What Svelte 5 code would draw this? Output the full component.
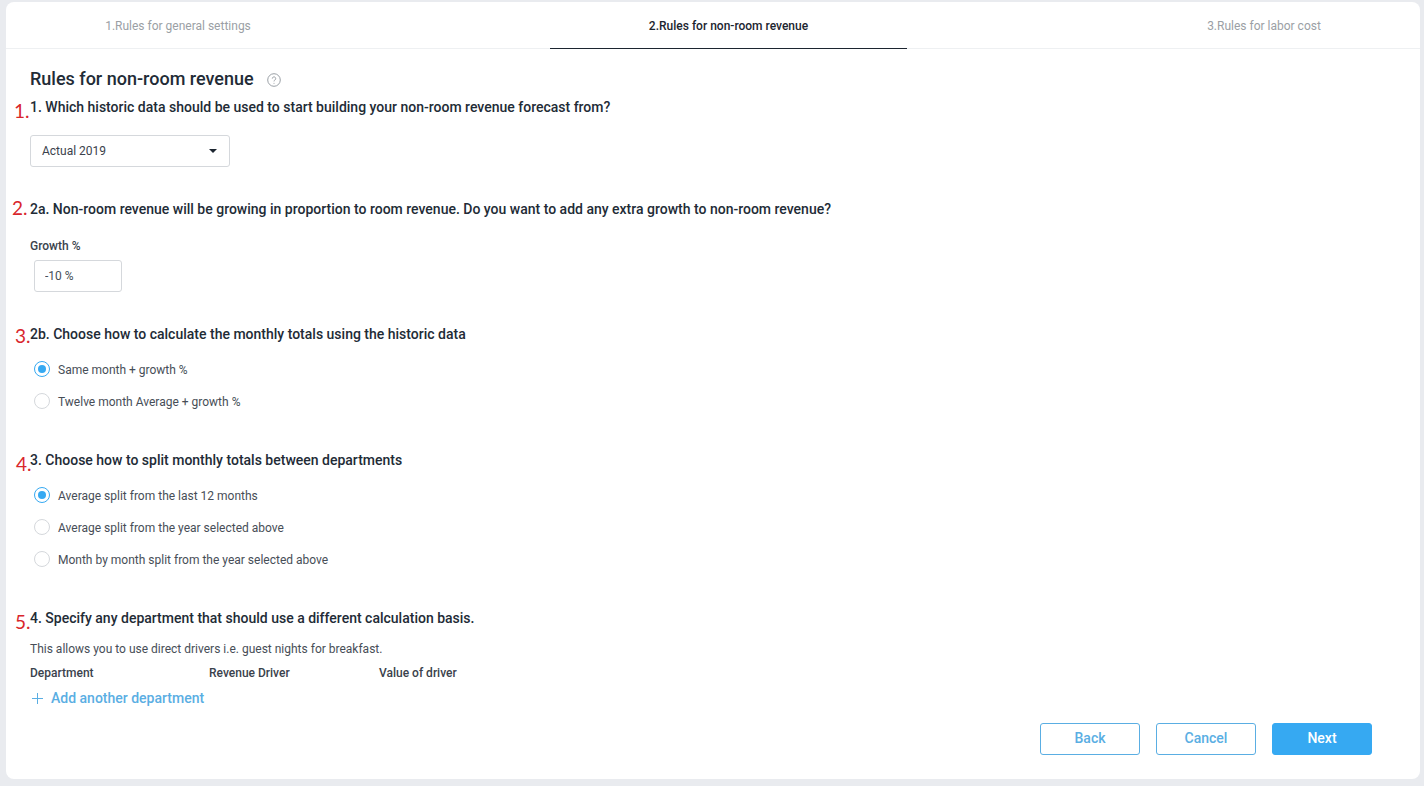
<script lang="ts">
    let growth = $state("-10 %");
    let monthly = $state("same");
    let split = $state("last12");

    const monthlyOptions = [
        { value: "same", label: "Same month + growth %" },
        { value: "twelve", label: "Twelve month Average + growth %" },
    ];

    const splitOptions = [
        { value: "last12", label: "Average split from the last 12 months" },
        { value: "year", label: "Average split from the year selected above" },
        { value: "month", label: "Month by month split from the year selected above" },
    ];
</script>

<div class="card">
    <nav class="tabs">
        <div class="tab first">1.Rules for general settings</div>
        <div class="tab active">2.Rules for non-room revenue</div>
        <div class="tab last">3.Rules for labor cost</div>
    </nav>

    <div class="content">
        <div class="title">
            <h1>Rules for non-room revenue</h1>
            <svg class="help" width="14" height="14" viewBox="0 0 14 14" fill="none">
                <circle cx="7" cy="7" r="6.3" stroke="#8f959c" stroke-width="0.9" />
                <path d="M5.3 5.6a1.7 1.7 0 1 1 2.6 1.4c-.6.4-.9.7-.9 1.4" stroke="#8f959c" stroke-width="0.9" />
                <circle cx="7" cy="10.2" r="0.5" fill="#8f959c" />
            </svg>
        </div>

        <section class="q1">
            <h2><span class="mark m1">1.</span>1. Which historic data should be used to start building your non-room revenue forecast from?</h2>
            <div class="select">
                <span>Actual 2019</span>
                <i class="caret"></i>
            </div>
        </section>

        <section class="q2">
            <h2><span class="mark m2">2.</span>2a. Non-room revenue will be growing in proportion to room revenue. Do you want to add any extra growth to non-room revenue?</h2>
            <div class="label">Growth %</div>
            <input class="growth" bind:value={growth} />
        </section>

        <section class="q3">
            <h2><span class="mark m3">3.</span>2b. Choose how to calculate the monthly totals using the historic data</h2>
            <div class="radios">
                {#each monthlyOptions as o}
                    <label class="radio">
                        <input type="radio" bind:group={monthly} value={o.value} />
                        <span class="dot"></span>
                        <span class="text">{o.label}</span>
                    </label>
                {/each}
            </div>
        </section>

        <section class="q4">
            <h2><span class="mark m4">4.</span>3. Choose how to split monthly totals between departments</h2>
            <div class="radios">
                {#each splitOptions as o}
                    <label class="radio">
                        <input type="radio" bind:group={split} value={o.value} />
                        <span class="dot"></span>
                        <span class="text">{o.label}</span>
                    </label>
                {/each}
            </div>
        </section>

        <section class="q5">
            <h2><span class="mark m5">5.</span>4. Specify any department that should use a different calculation basis.</h2>
            <p>This allows you to use direct drivers i.e. guest nights for breakfast.</p>
            <div class="cols">
                <span>Department</span>
                <span>Revenue Driver</span>
                <span>Value of driver</span>
            </div>
            <button class="add">
                <svg width="13" height="13" viewBox="0 0 13 13">
                    <path d="M6.5 1v11M1 6.5h11" stroke="#5aaee3" stroke-width="1" />
                </svg>
                Add another department
            </button>
        </section>

        <div class="actions">
            <button class="btn">Back</button>
            <button class="btn">Cancel</button>
            <button class="btn primary">Next</button>
        </div>
    </div>
</div>

<style>
    :global(body) {
        background: #e9ebef;
        font-family: Roboto, "Liberation Sans", sans-serif;
        color: #222b36;
    }

    .card {
        margin: 2px 4px 7px 6px;
        height: 777px;
        background: #fff;
        border-radius: 8px;
        box-sizing: border-box;
    }

    .tabs {
        display: flex;
        height: 47px;
        box-sizing: border-box;
        border-bottom: 1px solid #eef0f2;
        font-size: 12px;
        color: #9b9fa5;
    }

    .tab {
        height: 47px;
        box-sizing: border-box;
        padding-top: 16px;
        line-height: 16px;
        text-align: center;
    }

    .first {
        width: 344px;
    }

    .active {
        width: 357px;
        margin-left: 200px;
        font-weight: 500;
        color: #1c2530;
        border-bottom: 1px solid #1c2530;
    }

    .last {
        flex: 1;
        padding-left: 201px;
    }

    .content {
        padding: 18px 48px 0 24px;
    }

    .title {
        display: flex;
        align-items: center;
        gap: 13px;
    }

    h1 {
        margin: 0;
        font-size: 18px;
        line-height: 24px;
        font-weight: 500;
    }

    .help {
        margin-top: 2px;
    }

    h2 {
        position: relative;
        margin: 0;
        font-size: 14px;
        line-height: 20px;
        font-weight: 500;
    }

    .mark {
        position: absolute;
        font-family: Lato, sans-serif;
        font-size: 19px;
        font-weight: 400;
        line-height: 20px;
        color: #d9262c;
    }

    .m1 {
        left: -16px;
        top: 4px;
    }

    .m2 {
        left: -18px;
        top: -1px;
    }

    .m3 {
        left: -15px;
        top: 2px;
    }

    .m4 {
        left: -14px;
        top: 4px;
    }

    .m5 {
        left: -15px;
        top: 4px;
    }

    .q1 {
        margin-top: 6px;
    }

    .select {
        display: flex;
        align-items: center;
        justify-content: space-between;
        width: 200px;
        height: 32px;
        margin-top: 18px;
        padding: 0 12px 0 11px;
        box-sizing: border-box;
        border: 1px solid #d5d8dc;
        border-radius: 3px;
        font-size: 12px;
        color: #3a424c;
    }

    .caret {
        width: 0;
        height: 0;
        border-left: 4px solid transparent;
        border-right: 4px solid transparent;
        border-top: 4px solid #1c2530;
    }

    .q2 {
        margin-top: 32px;
    }

    .label {
        margin-top: 19px;
        font-size: 12px;
        line-height: 16px;
        font-weight: 500;
        color: #3a424c;
    }

    .growth {
        display: block;
        width: 88px;
        height: 32px;
        margin: 6px 0 0 4px;
        padding: 0 10px;
        box-sizing: border-box;
        border: 1px solid #d5d8dc;
        border-radius: 3px;
        outline: none;
        font: inherit;
        font-size: 12px;
        color: #474e57;
    }

    .q3 {
        margin-top: 32px;
    }

    .q4,
    .q5 {
        margin-top: 33px;
    }

    .radios {
        margin-top: 9px;
    }

    .radio {
        display: flex;
        align-items: center;
        height: 32px;
        padding-left: 4px;
        font-size: 12px;
        color: #474e57;
    }

    .radio input {
        display: none;
    }

    .text {
        padding-top: 2px;
    }

    .dot {
        position: relative;
        width: 16px;
        height: 16px;
        margin-right: 8px;
        box-sizing: border-box;
        border: 1px solid #d5d8dc;
        border-radius: 50%;
    }

    .radio input:checked + .dot {
        border-color: #36a9f2;
    }

    .radio input:checked + .dot::after {
        content: "";
        position: absolute;
        inset: 3px;
        background: #36a9f2;
        border-radius: 50%;
    }

    p {
        margin: 13px 0 0;
        font-size: 12px;
        line-height: 16px;
        color: #474e57;
    }

    .cols {
        display: grid;
        grid-template-columns: 179px 170px auto;
        justify-content: start;
        margin-top: 8px;
        font-size: 12px;
        line-height: 16px;
        font-weight: 500;
        color: #3a424c;
    }

    .add {
        display: flex;
        align-items: center;
        gap: 7px;
        margin-top: 7px;
        padding: 0 0 0 1px;
        height: 20px;
        border: 0;
        background: none;
        font: inherit;
        font-size: 14px;
        font-weight: 500;
        color: #5aaee3;
    }

    .actions {
        display: flex;
        justify-content: flex-end;
        gap: 16px;
        margin-top: 15px;
    }

    .btn {
        width: 100px;
        height: 32px;
        padding: 0 0 2px;
        border: 1px solid #5aaee3;
        border-radius: 3px;
        background: #fff;
        font: inherit;
        font-size: 14px;
        font-weight: 500;
        color: #5aaee3;
    }

    .primary {
        background: #36a9f2;
        border-color: #36a9f2;
        color: #fff;
    }
</style>
